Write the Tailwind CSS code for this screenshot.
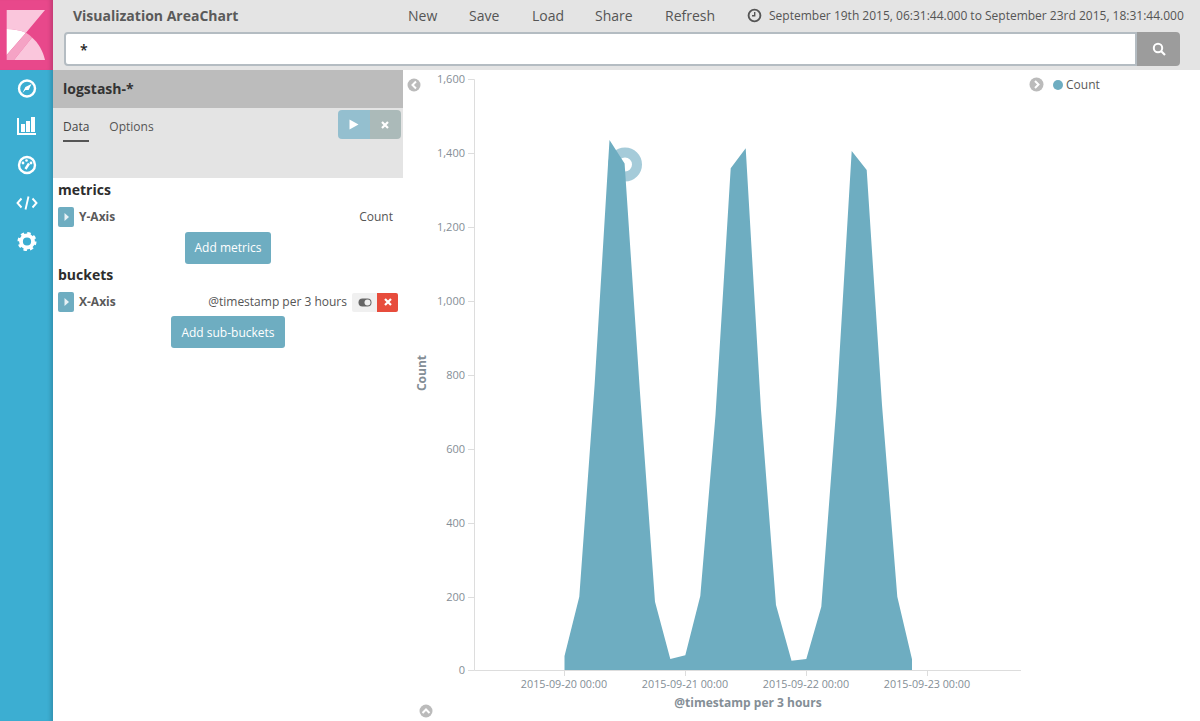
<!DOCTYPE html>
<html lang="en">
<head>
  <meta charset="UTF-8" />
  <title>Visualization AreaChart</title>
  <script src="https://cdn.jsdelivr.net/npm/@tailwindcss/browser@4"></script>
</head>
<body class="font-['Open_Sans',sans-serif] bg-white text-[#444] overflow-hidden">
  <div class="flex h-[721px] w-[1200px]">
    <!-- Sidebar -->
    <aside class="w-[53px] shrink-0 flex flex-col bg-[#3caed2] shadow-[inset_-5px_0_4px_-3px_rgba(0,0,0,0.18)]">
      <div class="h-[70px] bg-[#e8488b] shadow-[inset_-5px_0_4px_-3px_rgba(0,0,0,0.18)]">
        <svg width="53" height="70" viewBox="0 0 53 70">
          <path d="M6.7 10H45L26 32.8C20 30.2 13 29 6.7 29Z" fill="#fac6dc" />
          <path d="M6.7 29C13 29 20 30.2 26 32.8L6.7 55Z" fill="#fff" />
          <path d="M6.7 55L26 32.8C28 33.8 30 35.5 32 37.5L14 60H6.7Z" fill="#f5a3c5" />
          <path d="M14 60L32 37.5C38.5 43 43 51 45 60Z" fill="#fac6dc" />
        </svg>
      </div>
      <nav class="flex flex-col items-center pt-[3px] gap-[7px] text-white">
        <svg width="22" height="31" viewBox="0 0 22 31" fill="none"><circle cx="11" cy="15.5" r="8" stroke="#fff" stroke-width="2.4" /><path d="M15.5 11L12.6 17.1L9.4 17.1L6.5 20L9.4 13.9Z" fill="#fff" /></svg>
        <svg class="-mt-[1px] mb-[1px]" width="22" height="31" viewBox="0 0 22 31" fill="none"><path d="M2 8V24H20" stroke="#fff" stroke-width="2" /><rect x="5" y="14" width="4" height="8" fill="#fff" /><rect x="10" y="11" width="4" height="11" fill="#fff" /><rect x="15" y="7" width="4" height="15" fill="#fff" /></svg>
        <svg width="22" height="31" viewBox="0 0 22 31" fill="none"><circle cx="11" cy="16" r="8" stroke="#fff" stroke-width="2.4" /><circle cx="7" cy="14" r="1.4" fill="#fff" /><circle cx="10.5" cy="11.5" r="1.3" fill="#fff" /><circle cx="15" cy="14" r="1.4" fill="#fff" /><path d="M9.5 20L13 14.5" stroke="#fff" stroke-width="2.4" /></svg>
        <svg width="22" height="31" viewBox="0 0 22 31" fill="none"><path d="M5.5 11.5L1.5 16L5.5 20.5M16.5 11.5L20.5 16L16.5 20.5M12.5 9.5L9.5 22.5" stroke="#fff" stroke-width="1.9" /></svg>
        <svg class="mt-[1px]" width="22" height="31" viewBox="0 0 22 31" fill="none"><circle cx="11" cy="15.5" r="6" stroke="#fff" stroke-width="3.8" /><circle cx="11" cy="15.5" r="8.2" stroke="#fff" stroke-width="2.6" stroke-dasharray="3.4 3.04" /></svg>
      </nav>
    </aside>

    <div class="flex-1 flex flex-col min-w-0">
      <!-- Top bar -->
      <header class="h-[70px] bg-[#e4e4e4] pl-[11px] pr-[20px] flex flex-col">
        <div class="h-[32px] flex items-center relative">
          <h1 class="w-[344px] shrink-0 pl-[9px] text-[14px] font-bold text-[#5a5a5a] -mt-[2px]">Visualization AreaChart</h1>
          <ul class="flex text-[14px] text-[#555] -mt-[1px]">
            <li class="w-[61px]">New</li>
            <li class="w-[63px]">Save</li>
            <li class="w-[63px]">Load</li>
            <li class="w-[70px]">Share</li>
            <li class="w-[82px]">Refresh</li>
          </ul>
          <div class="flex items-center gap-[7px] text-[12px] text-[#555] whitespace-nowrap -mt-[1px]">
            <svg width="15" height="15" viewBox="0 0 15 15" fill="none"><circle cx="7.5" cy="7.5" r="5.9" stroke="#555" stroke-width="1.9" /><path d="M7.7 4V7.8H5" stroke="#555" stroke-width="1.4" /></svg>
            <span>September 19th 2015, 06:31:44.000 to September 23rd 2015, 18:31:44.000</span>
          </div>
        </div>
        <div class="flex h-[34px]">
          <div class="flex-1 bg-white border-2 border-[#b4bcc2] rounded-l-[4px] pl-[14px] flex items-center text-[14px] text-[#222] font-semibold">*</div>
          <button class="w-[43px] bg-[#9c9c9c] rounded-r-[4px] flex items-center justify-center">
            <svg width="14" height="14" viewBox="0 0 14 14" fill="none"><circle cx="6" cy="6" r="4.2" stroke="#fff" stroke-width="2" /><path d="M9 9L13 13" stroke="#fff" stroke-width="2.2" /></svg>
          </button>
        </div>
      </header>

      <div class="flex-1 flex min-h-0">
        <!-- Editor panel -->
        <section class="w-[350px] shrink-0">
          <div class="h-[38px] bg-[#bcbcbc] pl-[10px] pb-[1px] flex items-center text-[14px] font-bold text-[#333]">logstash-*</div>
          <div class="h-[70px] bg-[#e4e4e4] flex justify-between pl-[10px] pr-[2px]">
            <div class="flex gap-[20px] text-[12px] text-[#555] h-[34px]">
              <span class="h-[34px] pt-[10px] border-b-2 border-[#555] text-[#444]">Data</span>
              <span class="pt-[10px]">Options</span>
            </div>
            <div class="flex h-[29px] mt-[2px] rounded-[4px] overflow-hidden">
              <div class="w-[32px] bg-[#94bfcf] flex items-center justify-center">
                <svg width="10" height="11" viewBox="0 0 10 11"><path d="M0.5 0.5L9.5 5.5L0.5 10.5Z" fill="#fff" /></svg>
              </div>
              <div class="w-[31px] bg-[#abbab9] flex items-center justify-center pr-[1px]">
                <svg width="8" height="8" viewBox="0 0 8 8"><path d="M1 1L7 7M7 1L1 7" stroke="#fff" stroke-width="2.2" /></svg>
              </div>
            </div>
          </div>

          <div class="pl-[5px] pr-[5px]">
            <h2 class="text-[14px] font-bold text-[#2d2d2d] h-[24px] mt-[1px] leading-[21px]">metrics</h2>
            <div class="flex items-center h-[20px] mt-[4px]">
              <span class="w-[16px] h-[20px] bg-[#6eadc1] rounded-[2px] flex items-center justify-center">
                <svg width="5" height="8" viewBox="0 0 5 8"><path d="M0.5 0L5 4L0.5 8Z" fill="#e8f1f5" /></svg>
              </span>
              <span class="ml-[5px] text-[12px] font-bold text-[#5a5a5a]">Y-Axis</span>
              <span class="ml-auto mr-[5px] text-[12px] text-[#555]">Count</span>
            </div>
            <div class="flex justify-center mt-[5px]">
              <button class="w-[86px] h-[32px] bg-[#6eadc1] rounded-[3px] text-white text-[12px]">Add metrics</button>
            </div>
            <h2 class="text-[14px] font-bold text-[#2d2d2d] h-[22px] mt-[1px] leading-[20px]">buckets</h2>
            <div class="flex items-center h-[20px] mt-[5px]">
              <span class="w-[16px] h-[20px] bg-[#6eadc1] rounded-[2px] flex items-center justify-center">
                <svg width="5" height="8" viewBox="0 0 5 8"><path d="M0.5 0L5 4L0.5 8Z" fill="#e8f1f5" /></svg>
              </span>
              <span class="ml-[5px] text-[12px] font-bold text-[#5a5a5a]">X-Axis</span>
              <span class="ml-auto mr-[5px] text-[12px] text-[#555]">@timestamp per 3 hours</span>
              <span class="w-[25px] h-[19px] bg-[#f0f0f0] rounded-l-[2px] flex items-center justify-center">
                <svg width="14" height="9" viewBox="0 0 14 9"><rect x="0.5" y="0.5" width="13" height="8" rx="4" fill="#666" /><circle cx="9.5" cy="4.5" r="3" fill="#f0f0f0" /></svg>
              </span>
              <span class="w-[21px] h-[19px] bg-[#e74c3c] rounded-r-[2px] flex items-center justify-center">
                <svg width="8" height="8" viewBox="0 0 8 8"><path d="M1 1L7 7M7 1L1 7" stroke="#fff" stroke-width="2.2" /></svg>
              </span>
            </div>
            <div class="flex justify-center mt-[4px]">
              <button class="w-[114px] h-[32px] pt-[1px] bg-[#6eadc1] rounded-[3px] text-white text-[12px]">Add sub-buckets</button>
            </div>
          </div>
        </section>

        <!-- Chart, in page coordinates -->
        <svg class="flex-1" width="797" height="651" viewBox="403 70 797 651" fill="none">
          <circle cx="625" cy="164.5" r="12" stroke="#a5cbd9" stroke-width="10" />
          <path d="M564.5 670V656L579.3 596.7L594.6 385L609.5 140L624.6 163.5L639.8 390L655 601.7L670.3 659L685.3 655.3L700.3 596L715.5 415L730.7 168.3L745.7 148.3L761 410L776 605L791.5 660.7L806.3 659L821.3 606.7L836.5 405L851.7 151L866.7 170L882 405L897.3 596.7L912 659.3V670Z" fill="#6eadc1" />

          <path d="M468 79.5H474.5V670.5H1021M468 153.5H474.5M468 227.5H474.5M468 301.5H474.5M468 375.5H474.5M468 449.5H474.5M468 523.5H474.5M468 597.5H474.5M468 670.5H474.5M564.5 670.5V676M685.5 670.5V676M806.5 670.5V676M927.5 670.5V676" stroke="#ddd" />

          <g class="text-[11px] fill-[#848e96]" text-anchor="end">
            <text x="465" y="83">1,600</text>
            <text x="465" y="157">1,400</text>
            <text x="465" y="231">1,200</text>
            <text x="465" y="305">1,000</text>
            <text x="465" y="379">800</text>
            <text x="465" y="453">600</text>
            <text x="465" y="527">400</text>
            <text x="465" y="601">200</text>
            <text x="465" y="674">0</text>
          </g>
          <g class="text-[10.75px] fill-[#848e96]" text-anchor="middle">
            <text x="564" y="688">2015-09-20 00:00</text>
            <text x="685" y="688">2015-09-21 00:00</text>
            <text x="806" y="688">2015-09-22 00:00</text>
            <text x="927" y="688">2015-09-23 00:00</text>
          </g>
          <text x="748" y="707" text-anchor="middle" class="text-[12px] font-bold fill-[#848e96]">@timestamp per 3 hours</text>
          <text transform="translate(426 373) rotate(-90)" text-anchor="middle" class="text-[12px] font-bold fill-[#848e96]">Count</text>

          <circle cx="1058" cy="85" r="5" fill="#6eadc1" />
          <text x="1066" y="89" class="text-[12px] fill-[#5a5a5a]">Count</text>

          <!-- collapse toggles -->
          <circle cx="414" cy="85" r="6.5" fill="#bbb" />
          <path d="M416 81.5L412.5 85L416 88.5" stroke="#fff" stroke-width="2" />
          <circle cx="1036.5" cy="84.5" r="7" fill="#bbb" />
          <path d="M1035 81L1038.5 84.5L1035 88" stroke="#fff" stroke-width="2" />
          <circle cx="426" cy="711" r="6.5" fill="#bbb" />
          <path d="M422.5 713L426 709.5L429.5 713" stroke="#fff" stroke-width="2" />
        </svg>
      </div>
    </div>
  </div>
</body>
</html>
